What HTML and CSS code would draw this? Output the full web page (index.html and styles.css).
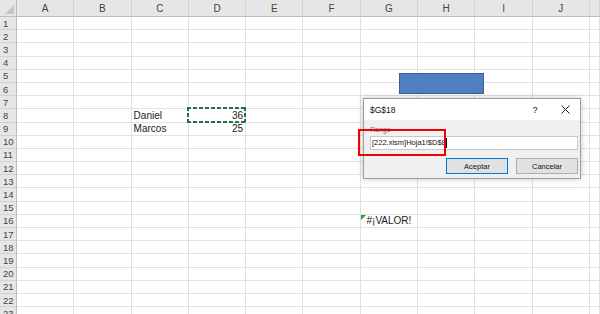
FILE: index.html
```html
<!DOCTYPE html>
<html lang="es">
<head>
  <meta charset="UTF-8">
  <title>Hoja1</title>
  <link rel="stylesheet" href="styles.css">
</head>
<body>
  <div class="sheet" id="sheet"></div>

  <!-- rectangle shape drawn on the sheet -->
  <div class="shape"></div>

  <div class="dialog">
    <div class="dlg-title">
      <span class="dlg-name">$G$18</span>
      <span class="dlg-help">?</span>
      <span class="dlg-close">
        <svg width="9" height="9" viewBox="0 0 9 9"><path d="M0.5 0.5 L8.5 8.5 M8.5 0.5 L0.5 8.5" stroke="#222" stroke-width="1" fill="none"/></svg>
      </span>
    </div>
    <div class="dlg-body">
      <div class="dlg-label">Range</div>
      <div class="dlg-input">[222.xlsm]Hoja1!$D$8<span class="caret"></span></div>
      <div class="dlg-buttons">
        <button class="btn btn-default">Aceptar</button>
        <button class="btn">Cancelar</button>
      </div>
    </div>
    <div class="mark"></div>
  </div>

  <script>
    const cols = ['A', 'B', 'C', 'D', 'E', 'F', 'G', 'H', 'I', 'J', ''];
    const rowCount = 23;
    // cell contents: key = col+row
    const data = {
      C8: { text: 'Daniel' },
      D8: { text: '36', cls: 'num copied' },
      C9: { text: 'Marcos' },
      D9: { text: '25', cls: 'num' },
      G16: { text: '#¡VALOR!', cls: 'err' }
    };

    const sheet = document.getElementById('sheet');
    let html = '<div class="corner"><span class="corner-tri"></span></div>';
    cols.forEach(c => { html += '<div class="ch">' + c + '</div>'; });
    for (let r = 1; r <= rowCount; r++) {
      html += '<div class="rh">' + r + '</div>';
      cols.forEach(c => {
        const d = data[c + r];
        if (d) {
          html += '<div class="cell ' + (d.cls || '') + '"><span>' + d.text + '</span></div>';
        } else {
          html += '<div class="cell"></div>';
        }
      });
    }
    sheet.innerHTML = html;
  </script>
</body>
</html>
```

FILE: styles.css
```css
html, body {
  margin: 0;
  padding: 0;
  overflow: hidden;
  background: #fff;
}
body {
  width: 600px;
  height: 314px;
  position: relative;
  font-family: 'Liberation Sans', Arial, sans-serif;
}
.sheet {
  display: grid;
  grid-template-columns: 17px repeat(10, 57.3px) 1fr;
  grid-template-rows: 17px repeat(23, 13.2px);
  width: 600px;
}
.corner {
  background: #e6e6e6;
  border-right: 1px solid #bcbcbc;
  border-bottom: 1px solid #bcbcbc;
  position: relative;
}
.corner-tri {
  position: absolute;
  right: 2px;
  bottom: 2px;
  width: 0;
  height: 0;
  border-left: 9px solid transparent;
  border-bottom: 9px solid #c4c4c4;
}
.ch {
  background: #e6e6e6;
  border-right: 1px solid #d2d2d2;
  border-bottom: 1px solid #bcbcbc;
  color: #444;
  font-size: 10px;
  display: flex;
  align-items: center;
  justify-content: center;
}
.rh {
  background: #e6e6e6;
  border-right: 1px solid #bcbcbc;
  border-bottom: 1px solid #d2d2d2;
  color: #444;
  font-size: 9.5px;
  display: flex;
  align-items: center;
  padding-left: 3px;
  overflow: hidden;
}
.cell {
  border-right: 1px solid #e1e1e1;
  border-bottom: 1px solid #e1e1e1;
  font-size: 10px;
  color: #1a1a1a;
  display: flex;
  align-items: flex-end;
  padding: 0 2px 0 2px;
  line-height: 12px;
  white-space: nowrap;
  position: relative;
}
.cell.num {
  justify-content: flex-end;
}
.cell.err {
  justify-content: center;
}
/* little green error triangle */
.cell.err::before {
  content: '';
  position: absolute;
  left: 0;
  top: 0;
  border-top: 5px solid #2b9a48;
  border-right: 5px solid transparent;
}
/* copy marquee */
.cell.copied::after {
  content: '';
  position: absolute;
  left: -2px;
  top: -2px;
  right: -1px;
  bottom: -1px;
  background:
    repeating-linear-gradient(90deg, #217346 0 4px, transparent 4px 6px) top / 100% 2px no-repeat,
    repeating-linear-gradient(90deg, #217346 0 4px, transparent 4px 6px) bottom / 100% 2px no-repeat,
    repeating-linear-gradient(180deg, #217346 0 4px, transparent 4px 6px) left / 2px 100% no-repeat,
    repeating-linear-gradient(180deg, #217346 0 4px, transparent 4px 6px) right / 2px 100% no-repeat;
}

.shape {
  position: absolute;
  left: 399px;
  top: 73px;
  width: 83px;
  height: 19px;
  background: #4e7fc0;
  border: 1px solid #3a5f94;
}

.dialog {
  position: absolute;
  left: 363px;
  top: 98px;
  width: 216px;
  height: 79px;
  border: 1px solid #9c9c9c;
  box-shadow: 0 0 6px rgba(0, 0, 0, 0.22);
  background: #f0f0f0;
  display: flex;
  flex-direction: column;
  font-size: 7.5px;
  color: #111;
}
.dlg-title {
  height: 21px;
  background: #fff;
  display: flex;
  align-items: center;
  padding-left: 6px;
  font-size: 8.5px;
}
.dlg-name {
  flex: 1;
}
.dlg-help {
  width: 14px;
  text-align: center;
  margin-right: 19px;
  font-size: 9px;
}
.dlg-close {
  width: 10px;
  margin-right: 9px;
  display: flex;
}
.dlg-body {
  flex: 1;
  padding: 6px 2px 0 6px;
  display: flex;
  flex-direction: column;
}
.dlg-label {
  color: #777;
  font-size: 7px;
  height: 10px;
}
.dlg-input {
  height: 12px;
  background: #fff;
  border: 1px solid #c8c8c8;
  padding-left: 1px;
  line-height: 12px;
  display: flex;
  align-items: center;
  white-space: nowrap;
}
.caret {
  display: inline-block;
  width: 1px;
  height: 10px;
  background: #000;
}
.dlg-buttons {
  display: flex;
  justify-content: flex-end;
  gap: 8px;
  margin-top: 8px;
}
.btn {
  width: 62px;
  height: 16px;
  padding: 0;
  background: #e1e1e1;
  border: 1px solid #adadad;
  font-family: 'Liberation Sans', Arial, sans-serif;
  font-size: 7.5px;
  color: #111;
}
.btn-default {
  border: 1px solid #0078d7;
}
.mark {
  position: absolute;
  left: -6px;
  top: 30px;
  width: 84px;
  height: 23px;
  border: 2px solid #f00000;
}
```
